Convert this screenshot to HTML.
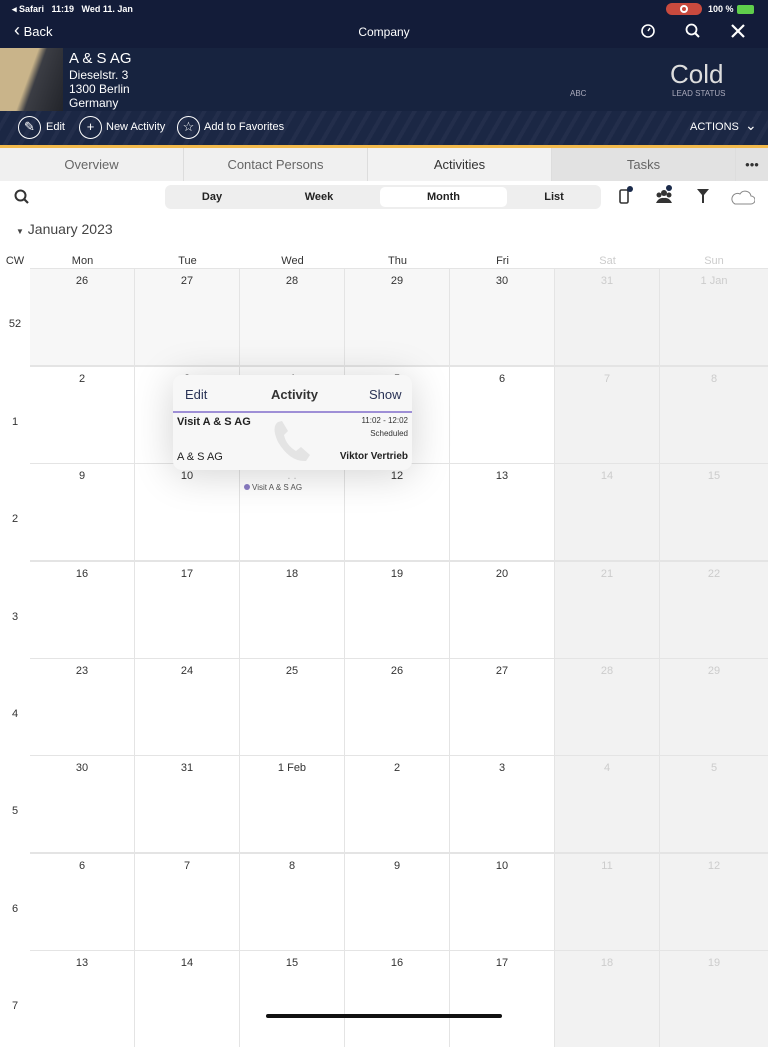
<!DOCTYPE html>
<html><head><meta charset="utf-8"><style>
*{margin:0;padding:0;box-sizing:border-box}
body{width:768px;height:1024px;overflow:hidden;font-family:"Liberation Sans",sans-serif;background:#fff;position:relative}
.a{position:absolute}
.top{left:0;top:0;width:768px;height:48px;background:#131c39;color:#fff}
.hdr{left:0;top:48px;width:768px;height:63px;background:#17233f;color:#fff}
.act{left:0;top:111px;width:768px;height:34px;background:repeating-linear-gradient(-60deg,#1b2744 0 9px,#232e4b 9px 13px);color:#fff;font-size:11px}
.circ{position:absolute;top:5px;width:23px;height:23px;border:1.3px solid #fff;border-radius:50%;text-align:center;line-height:20px;font-size:13px}
.tabs{left:0;top:148px;width:768px;height:33px;background:#f0f0f0;display:flex;font-size:13px;color:#666}
.tabs div{width:184px;text-align:center;line-height:33px;border-right:1px solid #ddd}
.seg{left:165px;top:185px;width:436px;height:24px;background:#eee;border-radius:6px;font-size:11px;font-weight:bold;color:#222}
.seg div{position:absolute;top:2px;height:20px;line-height:20px;text-align:center}
.row{position:absolute;left:30px;width:738px;height:96px;display:flex}
.row div{width:105px;height:96px;border-right:1.5px solid #e4e4e4;background:#fff;text-align:center;font-size:11px;color:#333;padding-top:6px}
.row div.g{background:#f7f7f7}
.row div.w{background:#f2f2f2;color:#ccc}
.row div:last-child{width:108px;border-right:none}
.cw{position:absolute;left:0;width:30px;text-align:center;font-size:11px;color:#333}
.wd{position:absolute;top:255px;font-size:11px;color:#333;width:105px;text-align:center}
</style></head><body>
<div class="a top">
 <div class="a" style="left:12px;top:4px;font-size:9px;font-weight:bold">◂ Safari&nbsp;&nbsp; 11:19&nbsp;&nbsp; Wed 11. Jan</div>
 <div class="a" style="left:666px;top:3px;width:36px;height:12px;background:#c94a3e;border-radius:6px"><div style="margin:2px auto;width:8px;height:8px;border:2px solid #fff;border-radius:50%"></div></div>
 <div class="a" style="left:708px;top:4px;font-size:9px;font-weight:bold">100 %</div>
 <div class="a" style="left:737px;top:5px;width:17px;height:9px;background:#5fce4b;border-radius:2px"></div>
 <div class="a" style="left:14px;top:22px;font-size:13px"><span style="font-size:18px;line-height:16px">‹</span> Back</div>
 <div class="a" style="left:0;width:768px;top:25px;text-align:center;font-size:12px">Company</div>
 <svg class="a" style="left:640px;top:23px" width="16" height="16"><circle cx="8" cy="8" r="6" fill="none" stroke="#fff" stroke-width="1.6"/><path d="M8 8 L10 5" stroke="#fff" stroke-width="1.5"/></svg>
 <svg class="a" style="left:685px;top:23px" width="16" height="16"><circle cx="6.5" cy="6.5" r="5" fill="none" stroke="#fff" stroke-width="1.8"/><path d="M10 10 L14 14" stroke="#fff" stroke-width="2"/></svg>
 <svg class="a" style="left:730px;top:23px" width="16" height="16"><path d="M2 14 L14 2 M2 2 L14 14" stroke="#fff" stroke-width="2.2"/></svg>
</div>
<div class="a hdr">
 <div class="a" style="left:0;top:0;width:63px;height:63px;background:linear-gradient(110deg,#c9b48a 0 45%,#3b3d44 55%,#22242a)"></div>
 <div class="a" style="left:69px;top:2px;font-size:15px">A &amp; S AG</div>
 <div class="a" style="left:69px;top:20px;font-size:12px;line-height:14px">Dieselstr. 3<br>1300 Berlin<br>Germany</div>
 <div class="a" style="left:570px;top:41px;font-size:8px;color:#aab">ABC</div>
 <div class="a" style="left:670px;top:11px;font-size:26px;color:#ddd">Cold</div>
 <div class="a" style="left:672px;top:41px;font-size:8px;color:#aab">LEAD STATUS</div>
</div>
<div class="a act">
 <div class="circ" style="left:18px">✎</div><div class="a" style="left:46px;top:10px">Edit</div>
 <div class="circ" style="left:79px">+</div><div class="a" style="left:106px;top:10px">New Activity</div>
 <div class="circ" style="left:177px">☆</div><div class="a" style="left:204px;top:10px">Add to Favorites</div>
 <div class="a" style="left:690px;top:10px">ACTIONS</div><div class="a" style="left:745px;top:6px;font-size:14px">⌄</div>
</div>
<div class="a" style="left:0;top:145px;width:768px;height:3px;background:#f2b94b"></div>
<div class="a tabs"><div>Overview</div><div>Contact Persons</div><div style="color:#333;background:#f2f2f2">Activities</div><div style="background:#e2e2e2">Tasks</div><div style="width:32px;background:#e2e2e2;border:none;color:#333">•••</div></div>
<svg class="a" style="left:14px;top:189px" width="16" height="16"><circle cx="6.5" cy="6.5" r="5" fill="none" stroke="#333" stroke-width="2"/><path d="M10 10 L14 14" stroke="#333" stroke-width="2.2"/></svg>
<div class="a seg"><div style="left:0;width:94px">Day</div><div style="left:94px;width:120px">Week</div><div style="left:215px;width:127px;background:#fff;border-radius:5px">Month</div><div style="left:342px;width:94px">List</div></div>
<svg class="a" style="left:618px;top:186px" width="16" height="18"><rect x="2" y="4" width="8" height="13" rx="1.5" fill="none" stroke="#333" stroke-width="1.6"/><circle cx="12" cy="3" r="3" fill="#1a2a4a"/></svg>
<svg class="a" style="left:654px;top:185px" width="20" height="18"><circle cx="10" cy="8" r="3" fill="#333"/><circle cx="5" cy="10" r="2.5" fill="#333"/><circle cx="15" cy="10" r="2.5" fill="#333"/><path d="M2 18 Q5 12 10 13 Q15 12 18 18Z" fill="#333"/><circle cx="15" cy="3" r="3" fill="#1a2a4a"/></svg>
<svg class="a" style="left:697px;top:189px" width="12" height="14"><path d="M0 0 H12 L7 6 V14 H5 V6Z" fill="#333"/></svg>
<svg class="a" style="left:730px;top:189px" width="25" height="16"><path d="M5 15 H21 A4 4 0 0 0 21 7 A6 6 0 0 0 10 5 A5 5 0 0 0 5 15Z" fill="none" stroke="#888" stroke-width="1"/></svg>
<div class="a" style="left:16px;top:221px;font-size:14px;color:#444"><span style="font-size:8px">▼</span> January 2023</div>
<div class="cw" style="top:255px">CW</div>
<div class="wd" style="left:30px">Mon</div><div class="wd" style="left:135px">Tue</div><div class="wd" style="left:240px">Wed</div><div class="wd" style="left:345px">Thu</div><div class="wd" style="left:450px">Fri</div><div class="wd" style="left:555px;color:#ccc">Sat</div><div class="wd" style="left:660px;color:#ccc;width:108px">Sun</div>
<div class="a" style="left:30px;top:268px;width:738px;height:756px;background:#e4e4e4"></div>
<div class="row" style="top:269px"><div class="g">26</div><div class="g">27</div><div class="g">28</div><div class="g">29</div><div class="g">30</div><div class="w">31</div><div class="w">1 Jan</div></div>
<div class="row" style="top:367px"><div>2</div><div>3</div><div>4</div><div>5</div><div>6</div><div class="w">7</div><div class="w">8</div></div>
<div class="row" style="top:464px"><div>9</div><div>10</div><div style="color:#bbb">. .</div><div>12</div><div>13</div><div class="w">14</div><div class="w">15</div></div>
<div class="row" style="top:562px"><div>16</div><div>17</div><div>18</div><div>19</div><div>20</div><div class="w">21</div><div class="w">22</div></div>
<div class="row" style="top:659px"><div>23</div><div>24</div><div>25</div><div>26</div><div>27</div><div class="w">28</div><div class="w">29</div></div>
<div class="row" style="top:756px"><div>30</div><div>31</div><div>1 Feb</div><div>2</div><div>3</div><div class="w">4</div><div class="w">5</div></div>
<div class="row" style="top:854px"><div>6</div><div>7</div><div>8</div><div>9</div><div>10</div><div class="w">11</div><div class="w">12</div></div>
<div class="row" style="top:951px"><div>13</div><div>14</div><div>15</div><div>16</div><div>17</div><div class="w">18</div><div class="w">19</div></div>
<div class="cw" style="top:318px">52</div><div class="cw" style="top:416px">1</div><div class="cw" style="top:513px">2</div><div class="cw" style="top:611px">3</div><div class="cw" style="top:708px">4</div><div class="cw" style="top:805px">5</div><div class="cw" style="top:903px">6</div><div class="cw" style="top:1000px">7</div>
<div class="a" style="left:244px;top:483px;font-size:8px;color:#555"><span style="display:inline-block;width:6px;height:6px;border-radius:50%;background:#8a7cc4;margin-right:2px"></span>Visit A &amp; S AG</div>
<div class="a" style="left:173px;top:375px;width:239px;height:95px;background:#f7f7f7;border-radius:9px;box-shadow:0 4px 40px rgba(0,0,0,.18)">
 <div class="a" style="left:12px;top:12px;font-size:13px;color:#2a3356">Edit</div>
 <div class="a" style="left:98px;top:12px;font-size:13px;font-weight:bold;color:#333">Activity</div>
 <div class="a" style="left:196px;top:12px;font-size:13px;color:#2a3356">Show</div>
 <div class="a" style="left:0;top:36px;width:239px;height:2px;background:#9e8fd6"></div>
 <svg class="a" style="left:95px;top:42px" width="50" height="50"><path d="M10 5 Q3 10 10 25 Q22 45 38 44 L42 38 L33 30 L28 34 Q18 28 16 18 L20 14 L14 4Z" fill="#e4e4e4"/></svg>
 <div class="a" style="left:4px;top:41px;font-size:11px;font-weight:bold;color:#222">Visit A &amp; S AG</div>
 <div class="a" style="right:4px;top:41px;font-size:8px;color:#333">11:02 - 12:02</div>
 <div class="a" style="right:4px;top:54px;font-size:8px;color:#333">Scheduled</div>
 <div class="a" style="left:4px;top:76px;font-size:11px;color:#222">A &amp; S AG</div>
 <div class="a" style="right:4px;top:76px;font-size:10px;font-weight:bold;color:#222">Viktor Vertrieb</div>
</div>
<div class="a" style="left:266px;top:1014px;width:236px;height:4px;background:#111;border-radius:2px"></div>
</body></html>
